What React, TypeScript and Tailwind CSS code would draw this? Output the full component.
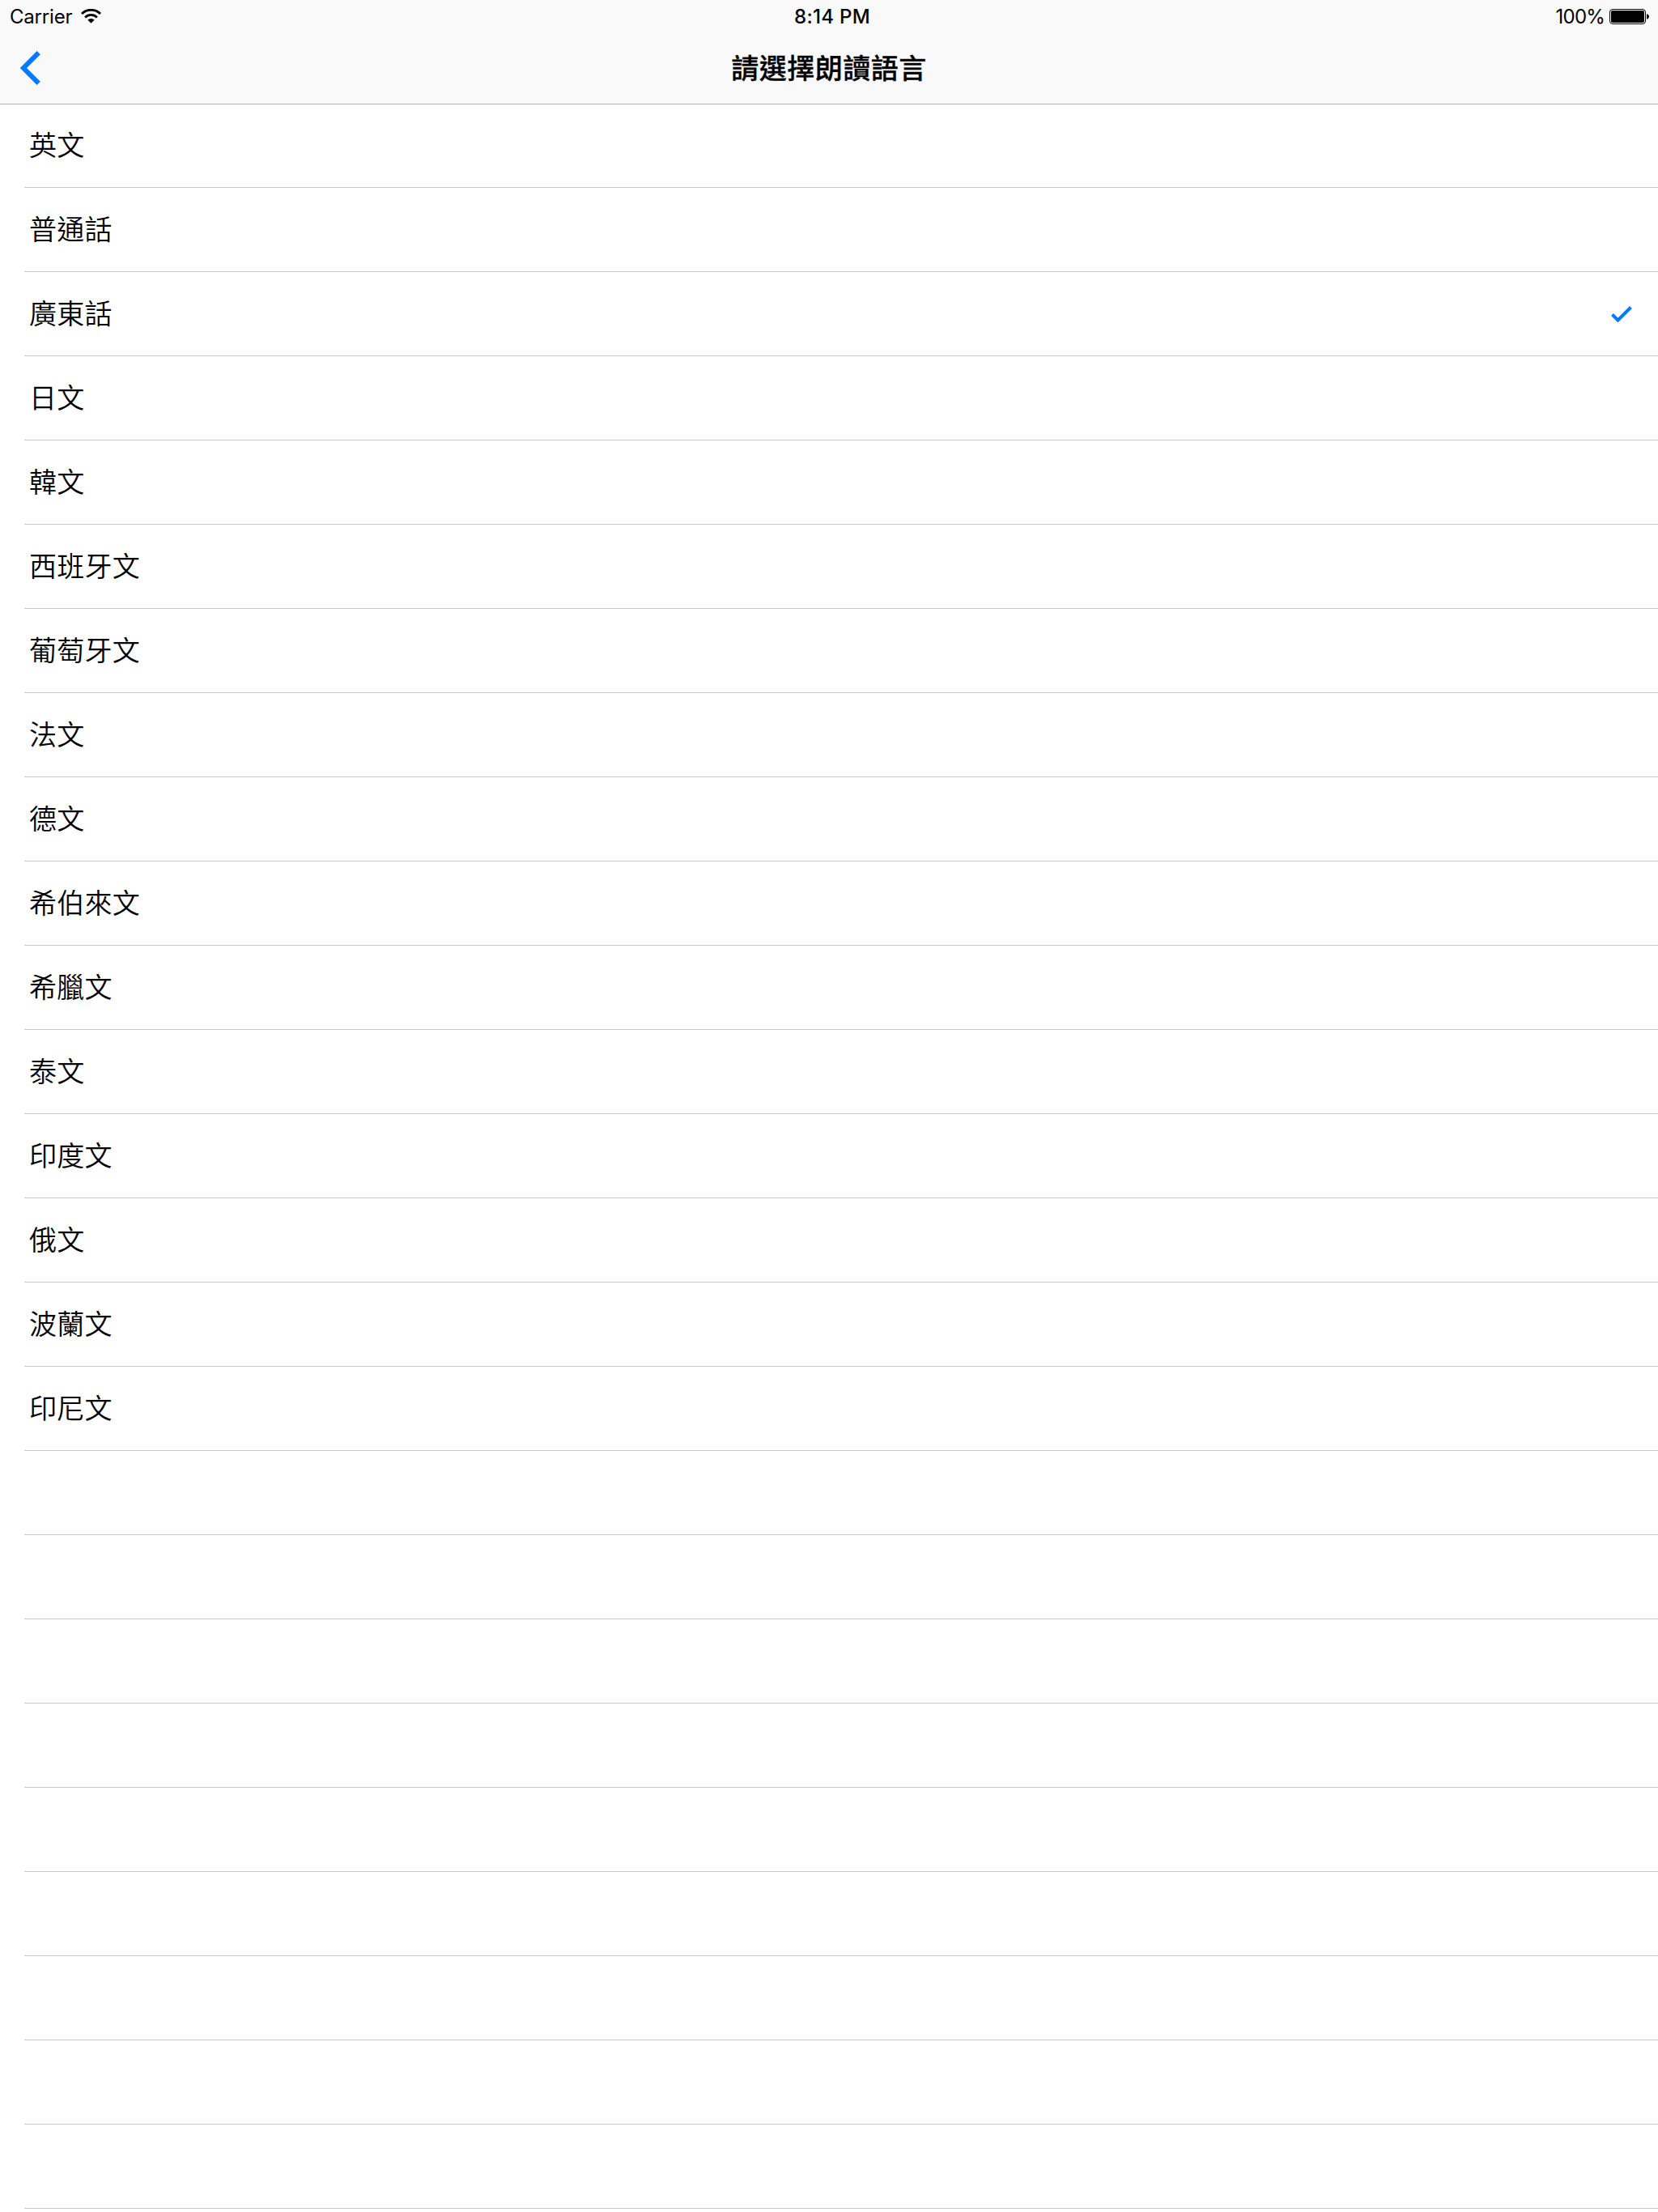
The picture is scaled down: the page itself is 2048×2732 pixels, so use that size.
type rowProps = {
  label?: string;
  selected?: boolean;
}

const languages = [
  '英文',
  '普通話',
  '廣東話',
  '日文',
  '韓文',
  '西班牙文',
  '葡萄牙文',
  '法文',
  '德文',
  '希伯來文',
  '希臘文',
  '泰文',
  '印度文',
  '俄文',
  '波蘭文',
  '印尼文',
];

const emptyRows = 9;

const WifiIcon = () => (
  <svg className="mb-px" width="25" height="18" viewBox="0 0 25 18" fill="none" stroke="#000" strokeWidth="2.8">
    <path d="M1 6a16.400 16.400 0 0 1 23 0" />
    <path d="M5.100 10.400a10.600 10.600 0 0 1 14.800 0" />
    <path d="M12.500 17.800l-4.200-4.200a6.200 6.200 0 0 1 8.400 0z" fill="#000" stroke="none" />
  </svg>
)

const BatteryIcon = () => (
  <svg width="49" height="19" viewBox="0 0 49 19">
    <rect x="0.5" y="0.5" width="44" height="18" rx="3.5" fill="none" stroke="#000" />
    <rect x="2" y="2" width="41" height="15" rx="2" fill="#000" />
    <path d="M46 6.2c1.900.5 3 1.700 3 3.300s-1.100 2.800-3 3.300z" fill="#000" />
  </svg>
)

const StatusBar = () => (
  <div className="grid h-10 grid-cols-3 items-center pl-3 pr-[11px] pt-px text-2xl leading-[39px] font-['Inter',sans-serif]">
    <div className="flex items-center gap-[11px]">
      <span className="tracking-[-0.2px]">Carrier</span>
      <WifiIcon />
    </div>
    <span className="pl-[7px] text-center font-[550] tracking-[0.3px]">8:14 PM</span>
    <div className="flex items-center justify-end gap-[6px]">
      <span className="tracking-[-0.8px]">100%</span>
      <BatteryIcon />
    </div>
  </div>
)

const NavBar = () => (
  <div className="grid h-[88px] grid-cols-3 items-center">
    <button className="ml-[25px] w-fit" aria-label="返回">
      <svg width="25" height="42" viewBox="0 0 25 42" fill="none" stroke="#007aff" strokeWidth="6">
        <path d="M22.700 2.200L3.900 21L22.700 39.800" />
      </svg>
    </button>
    <h1 className="pb-1 text-center text-[34px] font-medium tracking-[0.5px] [-webkit-text-stroke:0.3px_#000]">請選擇朗讀語言</h1>
  </div>
)

const LanguageRow = ({ label, selected }: rowProps) => (
  <li className="ml-[30px] flex h-[104px] items-center justify-between border-b border-[#c8c7cc] pl-[6px] pr-8 text-[34px]">
    <span className="pb-1 font-[350] tracking-[0.25px]">{label}</span>
    {selected && (
      <svg width="26" height="20" viewBox="0 0 26 20" fill="none" stroke="#007aff" strokeWidth="4">
        <path d="M1.500 10.500L8.500 17.500L24.500 1.500" />
      </svg>
    )}
  </li>
)

export default function App() {
  return (
    <div className="h-[2732px] w-full overflow-hidden bg-white text-black font-['Noto_Sans_CJK_TC',sans-serif]">
      <header className="-mb-px border-b border-[#b2b2b2] bg-[#f9f9f9]">
        <StatusBar />
        <NavBar />
      </header>
      <ul>
        {languages.map((language) => (
          <LanguageRow key={language} label={language} selected={language === '廣東話'} />
        ))}
        {Array.from({ length: emptyRows }, (_, i) => (
          <LanguageRow key={i} />
        ))}
      </ul>
    </div>
  )
}
